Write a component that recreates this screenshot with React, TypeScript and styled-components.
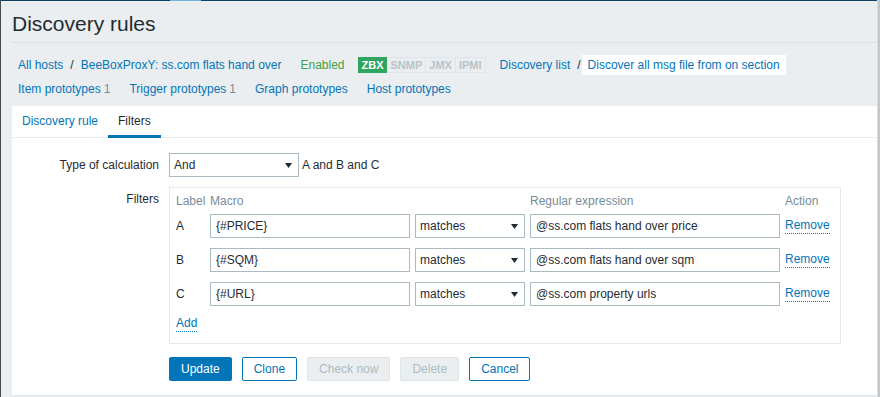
import React from 'react';
import styled, { createGlobalStyle, css } from 'styled-components';

const Global = createGlobalStyle`
  html, body { margin: 0; padding: 0; }
  body {
    background: #ebeef0;
    font-family: "Liberation Sans", Arial, sans-serif;
    font-size: 12px;
    color: #1f2c33;
  }
`;

const BLUE = '#0275b8';

const Frame = styled.div`
  width: 880px;
  height: 397px;
  display: flex;
  overflow: hidden;
  background: #ebeef0;
`;

const LeftEdge = styled.div`
  width: 1px;
  background: #4a4a4a;
`;

const RightEdge = styled.div`
  width: 2px;
  border-left: 1px solid #dadcdd;
  background: #c6c6c6;
`;

const Main = styled.main`
  flex: 1;
  min-width: 0;
  display: flex;
  flex-direction: column;
  border-top: 1px solid #0b4164;
  padding: 0 0 0 10px;
  position: relative;
`;

const TopGlow = styled.span`
  position: absolute;
  top: -1px;
  left: 169px;
  width: 31px;
  height: 1px;
  background: #6fb5e2;
`;

const Header = styled.header`
  margin-top: 11px;
  padding: 0 0 6px 1px;
  border-bottom: 1px solid #dde1e4;
`;

const Title = styled.h1`
  margin: 0;
  font-size: 21px;
  font-weight: normal;
  line-height: 24px;
  color: #1f2c33;
`;

const NavRow = styled.nav<{ $top?: number }>`
  display: flex;
  align-items: center;
  height: 24px;
  padding-left: 7px;
  margin-top: ${(p) => p.$top ?? 0}px;
  white-space: nowrap;
`;

const Link = styled.a`
  color: ${BLUE};
  text-decoration: none;
  cursor: pointer;
`;

const Sep = styled.span<{ $tight?: boolean }>`
  color: #1f2c33;
  margin: ${(p) => (p.$tight ? '0 1px 0 7px' : '0 7px')};
`;

const Status = styled.span`
  color: #429e47;
  margin-left: 19px;
`;

const Badges = styled.div`
  display: flex;
  margin-left: 13px;
`;

const Badge = styled.span<{ $on?: boolean }>`
  display: inline-block;
  height: 14px;
  line-height: 14px;
  padding: 0 3px;
  font-size: 11px;
  font-weight: bold;
  border: 1px solid #dfe4e7;
  margin-right: -1px;
  color: #b7c3c9;
  ${(p) =>
    p.$on &&
    css`
      background: #2fa65f;
      border-color: #2fa65f;
      color: #ffffff;
    `}
`;

const Crumb = styled.span`
  margin-left: 15px;
  display: flex;
  align-items: center;
`;

const Selected = styled.span`
  background: #ffffff;
  height: 20px;
  line-height: 20px;
  padding: 0 6px;
  color: ${BLUE};
`;

const NavItem = styled.span`
  margin-right: 19px;
`;

const Count = styled.span`
  color: #768d99;
  margin-left: 3px;
`;

const Panel = styled.section`
  flex: 1;
  margin: 5px 0 1px 1px;
  background: #ffffff;
  border-bottom: 1px solid #e2e5e7;
  display: flex;
  flex-direction: column;
`;

const TabBar = styled.div`
  display: flex;
  height: 31px;
  border-bottom: 1px solid #ebeef0;
`;

const Tab = styled.span<{ $active?: boolean }>`
  padding: 0 10px;
  height: 32px;
  line-height: 31px;
  margin-bottom: -1px;
  color: ${(p) => (p.$active ? '#1f2c33' : BLUE)};
  box-shadow: ${(p) => (p.$active ? `inset 0 -3px 0 ${BLUE}` : 'none')};
  box-sizing: border-box;
`;

const Form = styled.div`
  display: grid;
  grid-template-columns: 147px 1fr;
  column-gap: 10px;
  row-gap: 10px;
  padding-top: 15px;
  align-items: start;
`;

const Label = styled.label`
  text-align: right;
  line-height: 24px;
`;

const Field = styled.div`
  display: flex;
  align-items: center;
`;

const SelectBox = styled.div<{ $w: number }>`
  width: ${(p) => p.$w}px;
  height: 24px;
  box-sizing: border-box;
  border: 1px solid #acbbc2;
  background: #ffffff;
  display: flex;
  align-items: center;
  justify-content: space-between;
  padding: 0 6px 0 4px;
`;

const Hint = styled.span`
  margin-left: 3px;
`;

const FilterBox = styled.div`
  width: 672px;
  box-sizing: border-box;
  border: 1px solid #e6e9eb;
  padding: 6px 0 11px 6px;
  display: flex;
  flex-direction: column;
`;

const Rows = styled.div`
  display: flex;
  flex-direction: column;
  gap: 10px;
`;

const FRow = styled.div<{ $head?: boolean }>`
  display: grid;
  grid-template-columns: 29px 200px 110px 250px auto;
  column-gap: 5px;
  align-items: center;
  ${(p) =>
    p.$head &&
    css`
      color: #768d99;
      line-height: 14px;
      margin-bottom: -4px;
    `}
`;

const TextInput = styled.input`
  width: 100%;
  height: 24px;
  box-sizing: border-box;
  border: 1px solid #acbbc2;
  border-radius: 0;
  padding: 0 5px;
  margin: 0;
  font: inherit;
  color: #1f2c33;
  background: #ffffff;
  outline: none;
`;

const Dotted = styled.a`
  justify-self: start;
  align-self: center;
  color: ${BLUE};
  line-height: 15px;
  border-bottom: 1px dotted ${BLUE};
  cursor: pointer;
`;

const AddRow = styled.div`
  margin-top: 10px;
  display: flex;
`;

const Buttons = styled.div`
  display: flex;
  gap: 10px;
  margin-top: 3px;
`;

const Button = styled.button<{ $kind: 'main' | 'alt' | 'off' }>`
  height: 24px;
  padding: 0 11px;
  border-radius: 2px;
  font: inherit;
  cursor: pointer;
  border: 1px solid ${BLUE};
  background: #ffffff;
  color: ${BLUE};
  ${(p) =>
    p.$kind === 'main' &&
    css`
      background: ${BLUE};
      color: #ffffff;
    `}
  ${(p) =>
    p.$kind === 'off' &&
    css`
      background: #ebeef0;
      border-color: #dfe4e7;
      color: #acbbc2;
      cursor: default;
    `}
`;

const Arrow = () => (
  <svg width="7" height="5" viewBox="0 0 7 5" aria-hidden="true">
    <path d="M0 0 L7 0 L3.5 5 Z" fill="#1f2c33" />
  </svg>
);

const filters = [
  { label: 'A', macro: '{#PRICE}', regex: '@ss.com flats hand over price' },
  { label: 'B', macro: '{#SQM}', regex: '@ss.com flats hand over sqm' },
  { label: 'C', macro: '{#URL}', regex: '@ss.com property urls' },
];

export default function App() {
  return (
    <>
      <Global />
      <Frame>
        <LeftEdge />
        <Main>
          <TopGlow />
          <Header>
            <Title>Discovery rules</Title>
          </Header>
          <NavRow $top={10}>
            <Link>All hosts</Link>
            <Sep>/</Sep>
            <Link>BeeBoxProxY: ss.com flats hand over</Link>
            <Status>Enabled</Status>
            <Badges>
              <Badge $on>ZBX</Badge>
              <Badge>SNMP</Badge>
              <Badge>JMX</Badge>
              <Badge>IPMI</Badge>
            </Badges>
            <Crumb>
              <Link>Discovery list</Link>
              <Sep $tight>/</Sep>
              <Selected>Discover all msg file from on section</Selected>
            </Crumb>
          </NavRow>
          <NavRow>
            <NavItem>
              <Link>Item prototypes</Link>
              <Count>1</Count>
            </NavItem>
            <NavItem>
              <Link>Trigger prototypes</Link>
              <Count>1</Count>
            </NavItem>
            <NavItem>
              <Link>Graph prototypes</Link>
            </NavItem>
            <NavItem>
              <Link>Host prototypes</Link>
            </NavItem>
          </NavRow>
          <Panel>
            <TabBar>
              <Tab>Discovery rule</Tab>
              <Tab $active>Filters</Tab>
            </TabBar>
            <Form>
              <Label>Type of calculation</Label>
              <Field>
                <SelectBox $w={130}>
                  <span>And</span>
                  <Arrow />
                </SelectBox>
                <Hint>A and B and C</Hint>
              </Field>
              <Label>Filters</Label>
              <FilterBox>
                <Rows>
                  <FRow $head>
                    <span>Label</span>
                    <span>Macro</span>
                    <span />
                    <span>Regular expression</span>
                    <span>Action</span>
                  </FRow>
                  {filters.map((f) => (
                    <FRow key={f.label}>
                      <span>{f.label}</span>
                      <TextInput readOnly value={f.macro} />
                      <SelectBox $w={110}>
                        <span>matches</span>
                        <Arrow />
                      </SelectBox>
                      <TextInput readOnly value={f.regex} />
                      <Dotted>Remove</Dotted>
                    </FRow>
                  ))}
                </Rows>
                <AddRow>
                  <Dotted>Add</Dotted>
                </AddRow>
              </FilterBox>
              <span />
              <Buttons>
                <Button $kind="main">Update</Button>
                <Button $kind="alt">Clone</Button>
                <Button $kind="off">Check now</Button>
                <Button $kind="off">Delete</Button>
                <Button $kind="alt">Cancel</Button>
              </Buttons>
            </Form>
          </Panel>
        </Main>
        <RightEdge />
      </Frame>
    </>
  );
}
